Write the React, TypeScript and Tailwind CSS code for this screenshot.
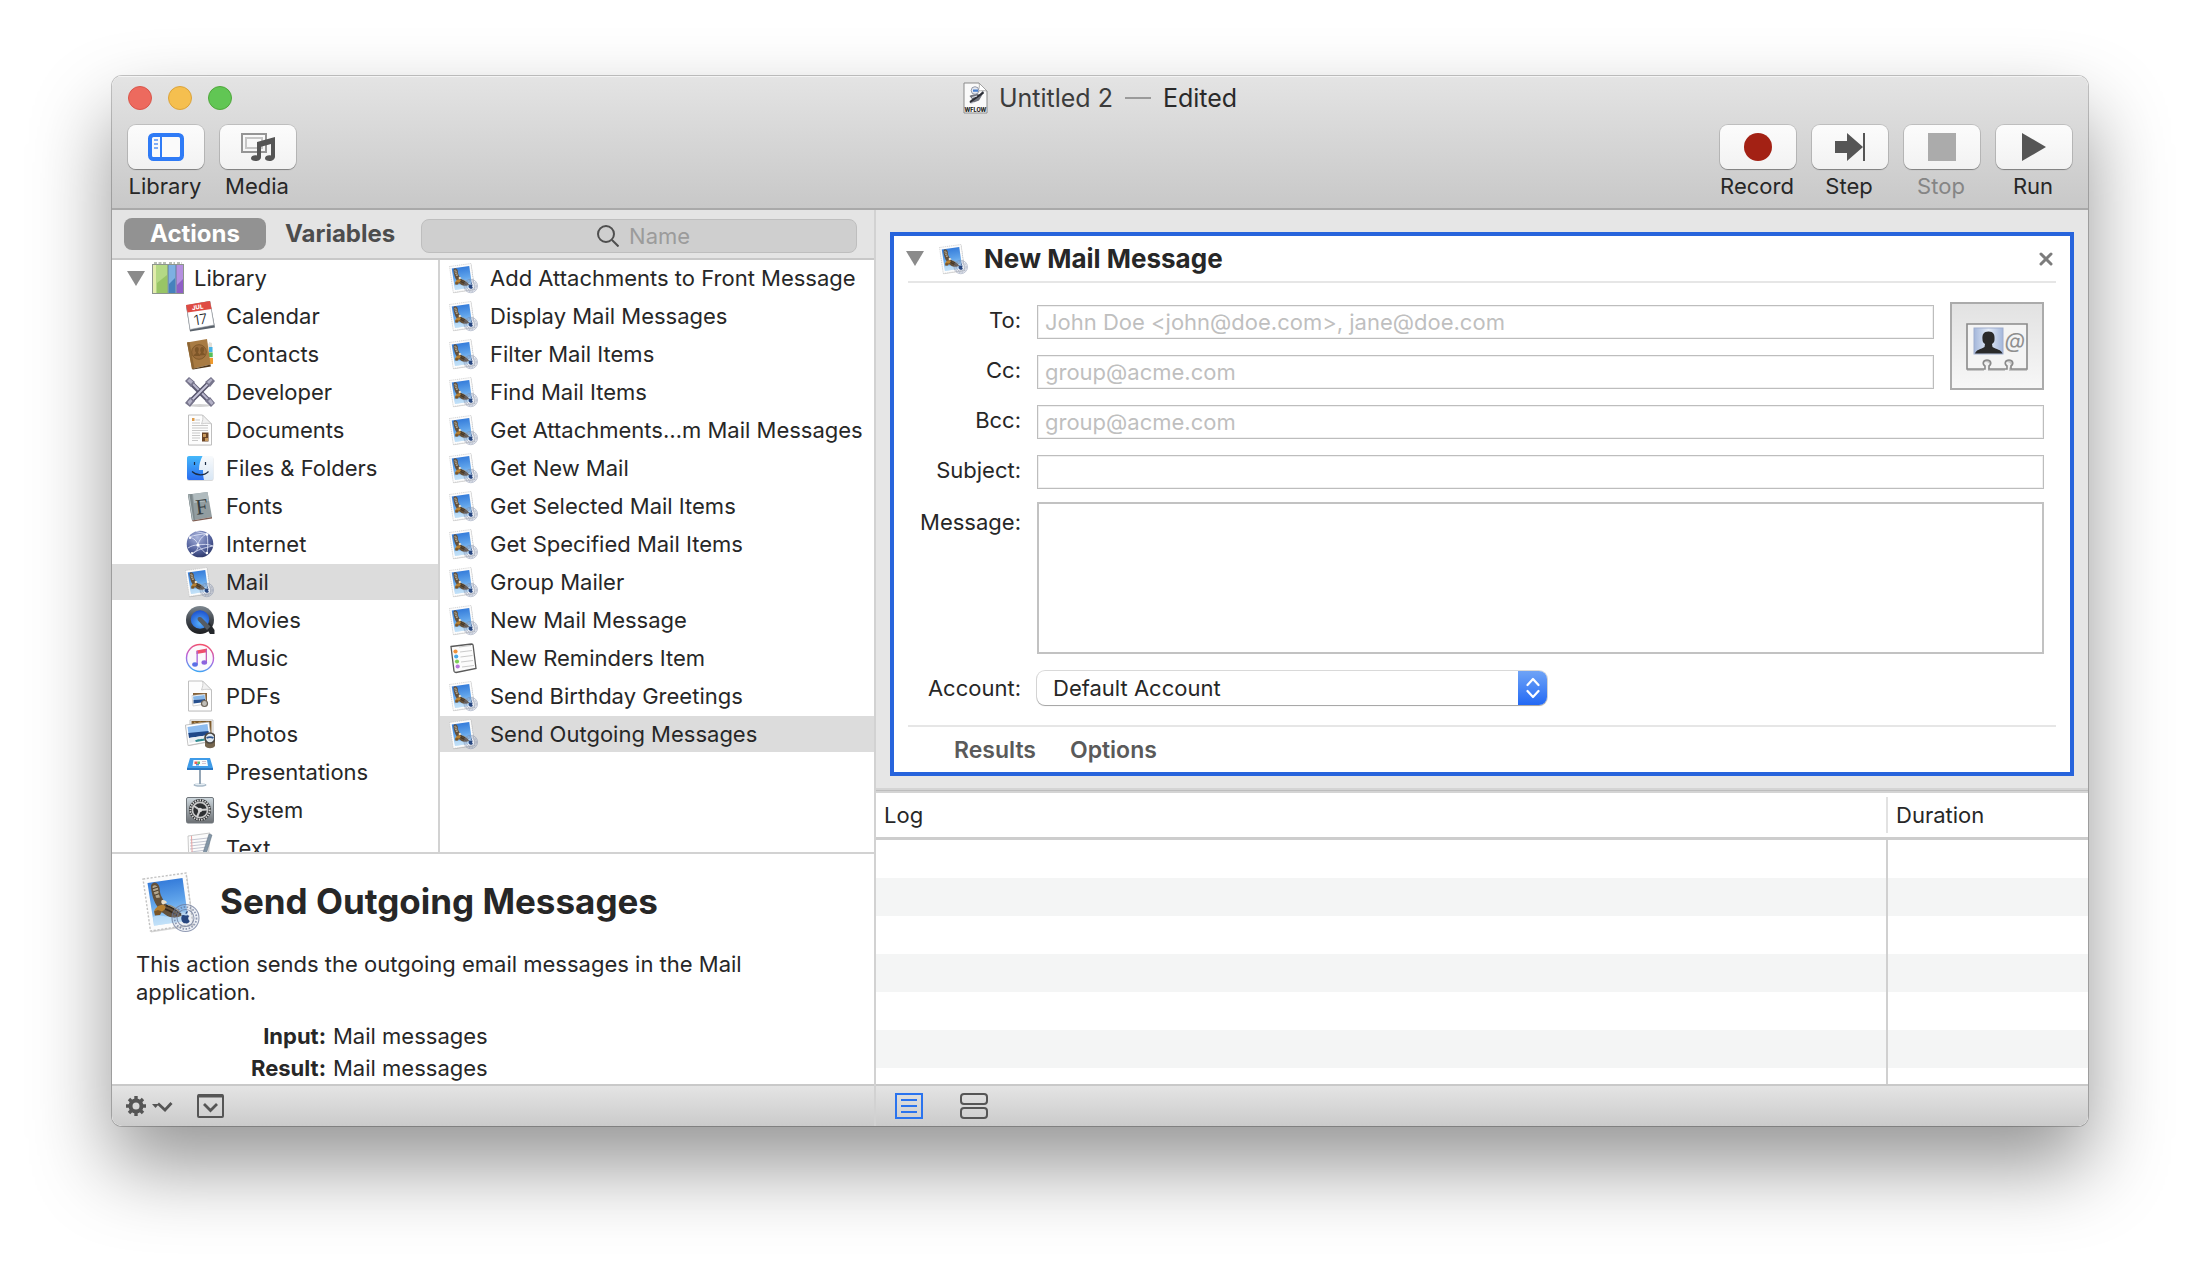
import type { ReactNode } from 'react';

/* ---------- Icons ---------- */

function MailIcon({ className }: { className: string }) {
  return (
    <svg viewBox="0 0 60 62" className={className} aria-hidden="true">
      <defs>
        <linearGradient id="sky" x1="0" y1="0" x2="0.15" y2="1">
          <stop offset="0" stopColor="#2a72d6" />
          <stop offset="0.55" stopColor="#5fa3ea" />
          <stop offset="1" stopColor="#a9d4f6" />
        </linearGradient>
      </defs>
      <path d="M2 9.500 45 3.500 52 55 9 61.500Z" fill="#000" opacity="0.160" />
      <path d="M1 8 44 2 51 53.500 8.500 60Z" fill="#fcfcfc" />
      <path d="M1 8 44 2 51 53.500 8.500 60Z" fill="none" stroke="#c2c2c2" strokeWidth="1.400" strokeDasharray="2.200 1.600" />
      <path d="M5.500 12 40.500 7 46.500 49.500 12 54.800Z" fill="url(#sky)" />
      <path d="M12 54.800 11 46c7-4 12 1 18-1s10-5 16.500-3l1 7.500Z" fill="#d6ebfa" opacity="0.550" />
      <path d="M9 16c-.3-2 1-4 3-4.500 3 0 5 2 5.500 5 .4 4 .6 7 2.500 10l3 6c3 2 5 2.500 8 4.500 4 2.500 7 4.500 9 7.500-3 2-8 2.500-12 1.500-4-1-6-4-9-5l-4-6c-3-4-5.500-12-6-19Z" fill="#63503a" />
      <path d="M10.500 15.500c1.500-2 4.500-1.500 5.500 1.500.5 4 .5 6 2 9.500l-3.500.5c-2-3.500-3.800-7.500-4-11.500Z" fill="#b3a68e" />
      <path d="M10 18l6-2M10.700 21l6-2M12 24.500l5.500-2" stroke="#4f4232" strokeWidth="1.200" fill="none" />
      <path d="M12 40.500c1-3.500 4.500-6.500 8.500-6.800 3 .5 4 3 2 5-3.500 3-7 4-10.500 1.800Z" fill="#b57f30" />
      <path d="M12 40.500 16 39l4 1.500-2 3.500-5 .5Z" fill="#7a5526" />
      <path d="M19.500 29.500c2-1 4.500 0 5.500 2l-3.500 2c-1.700 0-2.700-2-2-4Z" fill="#e9dfcb" />
      <path d="M24 34.500c5 1.500 10 4.500 15 9M23 38c5 1.500 8 4 12 6.500" stroke="#33281c" strokeWidth="1.700" fill="none" />
      <path d="M26 34c4 1 8 3 12 7" stroke="#a38e6d" strokeWidth="1.200" fill="none" />
      <g fill="none" stroke="#6d7a9b" strokeWidth="1.100" opacity="0.750">
        <circle cx="43.500" cy="47" r="13.500" fill="#b4c0d6" fillOpacity="0.250" />
        <circle cx="43.500" cy="47" r="8.500" />
        <circle cx="43.500" cy="47" r="11" strokeWidth="1.800" strokeDasharray="1.600 1.500" />
      </g>
      <path d="M40 44.500c1.500-1 2.500 0 3.500 0s2.500-1 4 .5c-2 1.500-1.500 4 .3 5-1 2-2 3-4.300 2.300-3 .7-5.500-4.500-3.500-7.800ZM43.500 43c0-2 1-3 2.300-3 0 2-1 3-2.300 3Z" fill="#27467f" />
    </svg>
  );
}

function Icon({ children }: { children: ReactNode }) {
  return (
    <svg viewBox="0 0 30 32" className="h-8 w-[30px] shrink-0" aria-hidden="true">
      {children}
    </svg>
  );
}

const BooksIcon = () => (
  <svg viewBox="0 0 32 32" className="size-8 shrink-0" aria-hidden="true">
    <path d="M2 1h13M17 1h6M25 1h5" stroke="#b8beb4" strokeWidth="2" strokeDasharray="3 1.500" />
    <rect x="0" y="2" width="16" height="30" fill="#b4d985" />
    <path d="M5 31V21l10-8v18Z" fill="#98c566" />
    <rect x="1" y="3" width="3" height="28" fill="#e2ecac" />
    <rect x="16" y="2" width="8" height="30" fill="#7db0e2" />
    <path d="M17 31V22l6-6v15Z" fill="#4681bd" />
    <rect x="24" y="2" width="8" height="30" fill="#b590e0" />
    <path d="M25 31V23l6-6v14Z" fill="#8f5fc6" />
    <path d="M16 2v30M24 2v30" stroke="#5b6f80" strokeWidth="0.800" />
    <path d="M0 31.500h32M.5 2v29M31.500 2v29M0 2.500h32" stroke="#8d958c" strokeWidth="1" />
  </svg>
);

const CalendarIcon = () => (
  <Icon>
    <path d="M1 5.500 25 1l5 26.500L5 31.500Z" fill="#5a626b" />
    <path d="M1.500 5.500 25 1.500l4 23.500L5 29.500Z" fill="#fff" stroke="#9aa0a6" strokeWidth="0.600" />
    <path d="M1 5 25 1l1.500 8L2.500 12.500Z" fill="#df4b43" />
    <g transform="rotate(-9 15 16)" textAnchor="middle" fontFamily="Inter, sans-serif">
      <text x="14" y="9" fontSize="6" fontWeight="800" fill="#fff">JUL</text>
      <text x="15" y="24.500" fontSize="14" fontWeight="300" fill="#222">17</text>
    </g>
  </Icon>
);

const ContactsIcon = () => (
  <Icon>
    <path d="M22 5l5 2 1 18-4 3Z" fill="#e9e4da" />
    <path d="M24 4l3 1v5h-3Z" fill="#e3e0d8" />
    <path d="M24 9h3.500v5H24Z" fill="#46b3e8" />
    <path d="M24 14.500h3.700v4.500H24Z" fill="#54c05a" />
    <path d="M24 20h4v6h-4Z" fill="#ef9a2d" />
    <path d="M2 4.500 22 1l3.500 25.500L7 31Z" fill="#a87b43" />
    <path d="M2 4.500 4.500 4l5 26.500L7 31Z" fill="#8d6533" />
    <path d="m7 31 18.500-4.500.3 2L8 31.500Z" fill="#4d3518" />
    <circle cx="14" cy="14" r="7.300" fill="#9b6d3b" stroke="#80592a" strokeWidth="1" />
    <path d="M8.500 18c.5-2 2.500-2 2.500-3.500-2-2-1-5.500 1-5.500s2.300 3 1 5.500c.3 1 1.500 1 2 3.500ZM14.500 17.500c.3-1.500 1-2 1.500-3-1.500-3-.5-5.500 1.300-5.500 2.300 0 2.500 3.500 1 5.300 0 1.200 1.700 1.200 2 2.700Z" fill="#7d5628" />
  </Icon>
);

const DeveloperIcon = () => (
  <Icon>
    <ellipse cx="15" cy="29.500" rx="11" ry="1.500" fill="#d3d3d3" />
    <path d="M5 6 25 26" stroke="#5c5a72" strokeWidth="5" />
    <path d="M5.500 5.500 25 25.500" stroke="#b9b7cd" strokeWidth="2" />
    <path d="M25 6 5 26" stroke="#55536a" strokeWidth="5" />
    <path d="M25 6 5 26" stroke="#c6c4d8" strokeWidth="2" />
    <path d="M0 5 4 1l6 5-4 5ZM20 6l6-5 4 4-5 6ZM0 27l5-6 5 4-5 6ZM20 25l5-4 5 6-4 4Z" fill="#77758c" />
    <path d="M2 5l2.500-2.500L8 5.500 6 8ZM22 6l4-3.500L27.500 4 24 8ZM2.500 26l3-3 2 2-3 4ZM23 25l2.500-2 3 4-2 2Z" fill="#b3b1c6" />
  </Icon>
);

const Page = ({ children }: { children: ReactNode }) => (
  <Icon>
    <path d="M3.500 1.500h14l9 9v21h-23Z" fill="#000" opacity="0.100" />
    <path d="M3.500 1h14l9 9v21h-23Z" fill="#fdfdfd" stroke="#bfbfbf" />
    <path d="M17.500 1c1 3 0 6-1 9 4-1 7-1 10 0Z" fill="#f1f1f1" stroke="#c4c4c4" strokeWidth="0.800" />
    {children}
  </Icon>
);

const DocumentsIcon = () => (
  <Page>
    <rect x="7" y="4" width="2.500" height="3" fill="#dd9d4f" />
    <path d="M10.500 6H15M7 9h8M7 11.500h16M7 14h16M7 16.500h16M7 19h8M7 21.500h8M7 24h8M7 26.500h6" stroke="#c3c3c3" strokeWidth="0.900" />
    <rect x="17" y="18.500" width="6.500" height="9" fill="#6b4526" />
    <path d="M18 20h3v3h-3ZM20 24h3v3h-3Z" fill="#c7985c" />
  </Page>
);

const FinderIcon = () => (
  <Icon>
    <defs>
      <linearGradient id="finderBlue" x1="0" y1="0" x2="0" y2="1">
        <stop offset="0" stopColor="#45b8fa" />
        <stop offset="1" stopColor="#2a6df0" />
      </linearGradient>
      <linearGradient id="finderWhite" x1="0" y1="0" x2="0" y2="1">
        <stop offset="0" stopColor="#f8fafc" />
        <stop offset="1" stopColor="#d8e6f4" />
      </linearGradient>
    </defs>
    <rect x="2" y="5" width="26.500" height="24" rx="2" fill="#000" opacity="0.150" />
    <rect x="2" y="4" width="26.500" height="24" rx="2" fill="url(#finderWhite)" />
    <path d="M4 4h13.500c-2 4-3.500 8-3.500 14h4c0 3.500.3 7 1 10H4a2 2 0 0 1-2-2V6c0-1.100.9-2 2-2Z" fill="url(#finderBlue)" />
    <path d="M9.500 10v3M20.500 10v3" stroke="#1c2c44" strokeWidth="1.200" />
    <path d="M7 19.500c5 4.500 12 4.500 16.500 0" fill="none" stroke="#1c2c44" strokeWidth="1.200" />
  </Icon>
);

const FontsIcon = () => (
  <Icon>
    <path d="M3 4.500 22.500 2 27 27l-20 3.500Z" fill="#929da0" />
    <path d="M3 4.500 7 4l3 26-3 .5Z" fill="#7d888b" />
    <path d="M4 5l4 25" stroke="#c6d0d3" strokeWidth="0.800" />
    <path d="M8 4 22.500 2l1.500 9L9 13Z" fill="#b0bbbe" />
    <path d="M7 30.500 27 27v1.500L8 31.500Z" fill="#7f5d52" />
    <text x="16.500" y="24" fontSize="22" textAnchor="middle" fontFamily="'Liberation Serif', serif" fill="#363d40" transform="rotate(-7 16 16)">F</text>
  </Icon>
);

const InternetIcon = () => (
  <Icon>
    <defs>
      <radialGradient id="globe" cx="0.4" cy="0.25" r="0.8">
        <stop offset="0" stopColor="#aab5dc" />
        <stop offset="0.6" stopColor="#56649f" />
        <stop offset="1" stopColor="#2b3667" />
      </radialGradient>
    </defs>
    <circle cx="15" cy="16" r="13.300" fill="url(#globe)" />
    <path d="M4 9c5 1 8 4 9 8s-3 7-6 9M13 17c5-1 10-1 15 1M13 17c3 4 6 7 9 9M13 17c1-5 4-9 9-11M4 9c6-2 12-3 18-3M22 6c1 6 1 14 0 20M3 20c3-2 6-3 10-3M7 26c5-4 11-6 21-8M22 6c-4-1-9-2-11-2.500" fill="none" stroke="#e3e8fa" strokeWidth="0.900" opacity="0.900" />
    <g fill="#fff">
      <circle cx="13" cy="17" r="1.600" />
      <circle cx="22" cy="6.500" r="1.300" />
      <circle cx="22" cy="25" r="1.200" />
      <circle cx="7" cy="25" r="1.100" />
      <circle cx="5" cy="10" r="1.100" />
    </g>
  </Icon>
);

const MoviesIcon = () => (
  <Icon>
    <defs>
      <linearGradient id="qRing" x1="0" y1="0" x2="0" y2="1">
        <stop offset="0" stopColor="#7e8890" />
        <stop offset="0.5" stopColor="#42484f" />
        <stop offset="1" stopColor="#1c1e21" />
      </linearGradient>
      <radialGradient id="qFace" cx="0.5" cy="0.7" r="0.7">
        <stop offset="0" stopColor="#56b0fb" />
        <stop offset="1" stopColor="#1b50cf" />
      </radialGradient>
    </defs>
    <circle cx="15" cy="16" r="14" fill="url(#qRing)" />
    <path d="M20 22l4-4 5.500 8v4H25Z" fill="#24272b" />
    <circle cx="15" cy="15.500" r="9.200" fill="url(#qFace)" />
    <path d="M13 13.500c1-1 3-.5 4 .5l8.500 8.500-3.500 3.500-8.500-9c-1-1-1.200-2.700-.5-3.500Z" fill="#555c64" />
  </Icon>
);

const MusicIcon = () => (
  <Icon>
    <defs>
      <linearGradient id="itunes" x1="0.6" y1="0" x2="0.4" y2="1">
        <stop offset="0" stopColor="#f4506b" />
        <stop offset="0.5" stopColor="#b865dd" />
        <stop offset="1" stopColor="#3fa6f4" />
      </linearGradient>
    </defs>
    <circle cx="15" cy="16" r="13.500" fill="#fbf9fc" stroke="url(#itunes)" strokeWidth="1.400" />
    <path d="M11.500 8.500 22 6.500v3.700L11.500 12Z" fill="#ee4f6d" />
    <path d="M11.500 9h1.300v13.500h-1.300Z" fill="#a862d8" />
    <path d="M20.700 7.500H22v13h-1.300Z" fill="#c35fb6" />
    <ellipse cx="10" cy="22.500" rx="2.800" ry="2.200" fill="#5b6fe6" />
    <ellipse cx="19.300" cy="20.500" rx="2.800" ry="2.200" fill="#8c63de" />
  </Icon>
);

const PdfIcon = () => (
  <Page>
    <path d="M8 13h14v12H8Z" fill="#866238" />
    <path d="M7 15.500 20 14l1 10-13 2Z" fill="#fff" stroke="#aaa" strokeWidth="0.500" />
    <path d="M8 16.500 19.500 15l.5 4-11.500 1Z" fill="#85b6e8" />
    <path d="M8.500 20 20 19l.5 3-12 1.500Z" fill="#27508e" />
    <circle cx="19.500" cy="23.500" r="3" fill="#c0beb8" stroke="#6c655b" strokeWidth="1.200" />
  </Page>
);

const PhotosIcon = () => (
  <Icon>
    <path d="M5 2h23v18H5Z" fill="#fff" stroke="#a9a9a9" strokeWidth="0.700" />
    <path d="M6.500 3h20v15h-20Z" fill="#7d5a2c" />
    <path d="M9 4l3 2 3-2 4 2 3-2" stroke="#c59d5b" fill="none" />
    <path d="M0 7.500 24 4l3 20-23 4Z" fill="#000" opacity="0.200" />
    <path d="M.5 7 24 4l2.500 19L3 27.500Z" fill="#fff" stroke="#adadad" strokeWidth="0.700" />
    <path d="M2.500 9 22.500 6l1 8-20 2Z" fill="#8dbcf0" />
    <path d="M3.300 15 23.500 13l.5 4-20 3Z" fill="#1f4787" />
    <path d="M4 20l20-3 .7 4L4.500 25Z" fill="#e9eef2" />
    <path d="M10 22.500c3-2 7-1 9-2l1 2-9 1.500Z" fill="#2e8b91" />
    <path d="M20 23h10v5c-2 3-8 3-10 0Z" fill="#75664f" />
    <circle cx="25" cy="20" r="5" fill="#dfe8f0" stroke="#4a4640" strokeWidth="1.700" />
    <path d="M21.500 20c2-1 5-1 7 0" stroke="#2f568f" strokeWidth="1.700" fill="none" />
  </Icon>
);

const KeynoteIcon = () => (
  <Icon>
    <ellipse cx="15" cy="29" rx="6.500" ry="1.800" fill="#a9bac9" />
    <ellipse cx="15" cy="28.300" rx="5" ry="1" fill="#e3ebf1" />
    <path d="M15 12v16" stroke="#94a5b5" strokeWidth="2" />
    <path d="M5 2h20l3 10H2Z" fill="#3f9be8" />
    <path d="M2 12h26v2H2Z" fill="#2877c4" />
    <path d="M8.500 4h13.500l1 6H7.500Z" fill="#f6fafd" />
    <path d="M9.500 5.500h3V8h-3Z" fill="#ec5f58" />
    <path d="M12.500 5.500H15V8h-2.500Z" fill="#5cc16a" />
    <path d="M11 8h3v1.500h-3Z" fill="#4a90e2" />
    <path d="M17 5.500h4M17 7.500h4" stroke="#d4c3cf" />
  </Icon>
);

const SystemIcon = () => (
  <Icon>
    <defs>
      <linearGradient id="sysBg" x1="0" y1="0" x2="0" y2="1">
        <stop offset="0" stopColor="#cfd9df" />
        <stop offset="1" stopColor="#6b6f73" />
      </linearGradient>
    </defs>
    <rect x="1.500" y="3.500" width="27" height="25.500" rx="1.500" fill="url(#sysBg)" stroke="#71777c" />
    <circle cx="15" cy="16" r="11" fill="#26282a" />
    <circle cx="15" cy="16" r="9.700" fill="none" stroke="#d2d2d2" strokeWidth="2" strokeDasharray="1.500 1" />
    <circle cx="15" cy="16" r="7.600" fill="#2e3032" stroke="#c8c8c8" strokeWidth="1.700" />
    <path d="M15 16 9 12M15 16l7-.5M15 16l-3 7" stroke="#cfcfcf" strokeWidth="2" />
    <circle cx="15" cy="16" r="2.200" fill="#d8d8d8" />
  </Icon>
);

const TextIcon = () => (
  <Icon>
    <path d="M3 4 25 1l-2 29-19 2Z" fill="#fbfbfb" stroke="#bcbcbc" strokeWidth="0.800" />
    <path d="M5 8l18-2M5 11l18-2M5 14l17-2M5 17l17-2M6 20l15-2" stroke="#b5b9c6" strokeWidth="0.800" />
    <path d="M6.500 4 7.500 31" stroke="#e69a98" strokeWidth="0.900" />
    <path d="M24 2l3 1-8 26-3 2v-4Z" fill="#8295a6" stroke="#61717e" strokeWidth="0.500" />
  </Icon>
);

const RemindersIcon = () => (
  <Icon>
    <path d="M2 4.500 22.500 2c1 0 1.500.3 1.600 1.200L27 26.500 7 30.500c-1 0-1.800-.3-2-1.300Z" fill="#fcfcfc" stroke="#5a5a5a" strokeWidth="1.300" />
    <path d="m11 10 12-1.500M11.500 15l12-1.500M12 20l12-1.500M13 25l12-1.500M10 5l12-1.500" stroke="#c4c4c4" strokeWidth="0.900" />
    <circle cx="6.500" cy="9.500" r="2.100" fill="#f0923a" />
    <circle cx="7.200" cy="14.500" r="2.100" fill="#48a8e8" />
    <circle cx="8" cy="19.500" r="2.100" fill="#7dce58" />
    <circle cx="8.700" cy="24.500" r="2.100" fill="#b878dd" />
  </Icon>
);

const ListMail = () => <MailIcon className="h-8 w-[30px] shrink-0" />;

const Triangle = () => (
  <svg viewBox="0 0 18 15" className="h-[15px] w-[18px] shrink-0" aria-hidden="true">
    <path d="M0 0h18L9 15Z" fill="#8b8b8b" />
  </svg>
);

const WorkflowDocIcon = () => (
  <svg viewBox="0 0 26 32" className="h-8 w-[26px]" aria-hidden="true">
    <path d="M1 1h15l8 8v22H1Z" fill="#fafafa" stroke="#8b8b8b" />
    <path d="M16 1c1 3 0 6-1 8 4-.5 6-.5 9 0Z" fill="#fff" stroke="#9b9b9b" strokeWidth="0.800" />
    <path d="M6.500 14c2-1.500 8-3 10-1.500l3-3.500 1.500 1-5 8.500-8 3-1.500-1 2.500-3.500Z" fill="#70737d" />
    <path d="M7 20 20.500 10.500" stroke="#2a2c33" strokeWidth="2" />
    <path d="M9 15.500l5-1.500M8 21.500l3-1" stroke="#d4d7df" strokeWidth="1.300" />
    <circle cx="12" cy="8.500" r="3.800" fill="#e7eaf1" stroke="#7e8494" strokeWidth="0.800" />
    <path d="M10 7.500h5v2.200h-5Z" fill="#477fd0" />
    <text x="12.500" y="29.500" fontSize="5.500" fontWeight="800" textAnchor="middle" fontFamily="Inter, sans-serif" fill="#222">WFLOW</text>
  </svg>
);

const LibraryGlyph = () => (
  <svg viewBox="0 0 36 28" className="h-7 w-9" aria-hidden="true">
    <rect x="2" y="2" width="32" height="24" rx="3.500" fill="#fafafa" stroke="#2f7bf6" strokeWidth="4" />
    <path d="M13 3v22" stroke="#2f7bf6" strokeWidth="2" />
    <path d="M6 7h4M6 11h4M6 15h4" stroke="#2f7bf6" strokeWidth="2" opacity="0.600" />
  </svg>
);

const MediaGlyph = () => (
  <svg viewBox="0 0 36 28" className="h-7 w-9" aria-hidden="true">
    <rect x="2" y="1" width="24" height="18" fill="none" stroke="#959595" strokeWidth="2" />
    <rect x="6" y="5" width="16" height="10" fill="none" stroke="#c6c6c6" strokeWidth="2" />
    <path d="M17 9 35 4v19.500c0 2.500-2.300 4.500-5.500 4.500-2.600 0-4.500-1-4.500-2.700 0-2.300 3.200-3.500 6-2.800V11l-10 2.800V24c0 2.500-2.300 4-5.500 4-2.600 0-4.500-1-4.500-2.700 0-2.300 3-3.500 6-2.800Z" fill="#555" />
  </svg>
);

const RecordGlyph = () => (
  <svg viewBox="0 0 28 28" className="size-7" aria-hidden="true">
    <circle cx="14" cy="14" r="14" fill="#a32114" />
  </svg>
);

const StepGlyph = () => (
  <svg viewBox="0 0 30 28" className="h-7 w-[30px]" aria-hidden="true">
    <path d="M0 8h12V0l16 14-16 14v-8H0Z" fill="#555" />
    <path d="M29 0v28" stroke="#555" strokeWidth="2" />
  </svg>
);

const StopGlyph = () => (
  <svg viewBox="0 0 28 28" className="size-7" aria-hidden="true">
    <path d="M0 0h28v28H0Z" fill="#ababab" />
  </svg>
);

const RunGlyph = () => (
  <svg viewBox="0 0 24 28" className="h-7 w-6" aria-hidden="true">
    <path d="M0 0l24 14L0 28Z" fill="#555" />
  </svg>
);

const CardGlyph = () => (
  <svg viewBox="0 0 64 52" className="h-[52px] w-16" aria-hidden="true">
    <defs>
      <linearGradient id="portrait" x1="0" y1="0" x2="1" y2="0">
        <stop offset="0" stopColor="#a3b6da" />
        <stop offset="0.5" stopColor="#e4ecf8" />
        <stop offset="1" stopColor="#a3b6da" />
      </linearGradient>
    </defs>
    <path d="M2 4h60v45H44v-3c3-2 2-6-2-6s-5 4-2 6v3H23v-3c3-2 2-6-2-6s-5 4-2 6v3H2Z" fill="#000" opacity="0.180" />
    <path d="M2 2h60v45H46v-3c3-2 2-6-2-6s-5 4-2 6v3H24v-3c3-2 2-6-2-6s-5 4-2 6v3H2Z" fill="#f4f4f4" stroke="#8a8a8a" strokeWidth="1.600" />
    <rect x="9" y="6" width="29" height="26" fill="url(#portrait)" stroke="#a0aece" />
    <path d="M10 31.500c1-4 6-4 9.500-6.500l.5-3c-2-1-2.500-3-2.500-4.500-.5-5 1-8 6-8s6.500 3 6 8c0 1.500-.5 3.500-2.500 4.500l.5 3c3.500 2.500 9 2.500 10 6.500Z" fill="#2a2a2a" />
    <text x="50" y="26" fontSize="21" fontStyle="italic" textAnchor="middle" fontFamily="Inter, sans-serif" fill="#8f8f8f">@</text>
  </svg>
);

/* ---------- Data ---------- */

const libraryItems: { name: string; icon: ReactNode }[] = [
  { name: 'Calendar', icon: <CalendarIcon /> },
  { name: 'Contacts', icon: <ContactsIcon /> },
  { name: 'Developer', icon: <DeveloperIcon /> },
  { name: 'Documents', icon: <DocumentsIcon /> },
  { name: 'Files & Folders', icon: <FinderIcon /> },
  { name: 'Fonts', icon: <FontsIcon /> },
  { name: 'Internet', icon: <InternetIcon /> },
  { name: 'Mail', icon: <ListMail /> },
  { name: 'Movies', icon: <MoviesIcon /> },
  { name: 'Music', icon: <MusicIcon /> },
  { name: 'PDFs', icon: <PdfIcon /> },
  { name: 'Photos', icon: <PhotosIcon /> },
  { name: 'Presentations', icon: <KeynoteIcon /> },
  { name: 'System', icon: <SystemIcon /> },
  { name: 'Text', icon: <TextIcon /> },
];

const actions = [
  'Add Attachments to Front Message',
  'Display Mail Messages',
  'Filter Mail Items',
  'Find Mail Items',
  'Get Attachments…m Mail Messages',
  'Get New Mail',
  'Get Selected Mail Items',
  'Get Specified Mail Items',
  'Group Mailer',
  'New Mail Message',
  'New Reminders Item',
  'Send Birthday Greetings',
  'Send Outgoing Messages',
];

/* ---------- Parts ---------- */

function ToolButton({ label, disabled, children }: { label: string; disabled?: boolean; children: ReactNode }) {
  return (
    <button type="button" disabled={disabled} className="group flex w-[76px] flex-col items-center gap-1">
      <span className="flex h-11 w-full items-center justify-center rounded-lg bg-linear-to-b from-[#fcfcfc] to-[#f2f2f2] shadow-[0_0_0_1px_rgba(0,0,0,0.12),0_1px_1px_rgba(0,0,0,0.3)]">
        {children}
      </span>
      <span className="pr-0.5 leading-[26px] group-disabled:text-[#858585]">{label}</span>
    </button>
  );
}

function TitleBar() {
  return (
    <header className="border-b-2 border-[#a9a9a9] bg-linear-to-b from-[#e4e4e4] to-[#c8c8c8] px-4 pb-[9px] shadow-[inset_0_1px_0_#f4f4f4]">
      <div className="grid h-11 grid-cols-[1fr_auto_1fr] items-center">
        <div className="flex gap-4">
          <button type="button" aria-label="Close window" className="size-6 rounded-full border border-[#d9564b] bg-[#ed6a5e]" />
          <button type="button" aria-label="Minimize window" className="size-6 rounded-full border border-[#dba33b] bg-[#f5bf4f]" />
          <button type="button" aria-label="Zoom window" className="size-6 rounded-full border border-[#50a73c] bg-[#61c654]" />
        </div>
        <h1 className="flex items-center text-[25px] leading-8 text-[#3c3c3c]">
          <WorkflowDocIcon />
          <span className="ml-[10px]">Untitled 2</span>
          <span className="mx-3 h-0.5 w-[26px] bg-[#9a9a9a]" />
          <span className="text-[#2a2a2a]">Edited</span>
        </h1>
      </div>
      <div className="flex justify-between pt-[5px]">
        <div className="flex gap-4">
          <ToolButton label="Library"><LibraryGlyph /></ToolButton>
          <ToolButton label="Media"><MediaGlyph /></ToolButton>
        </div>
        <div className="flex gap-4">
          <ToolButton label="Record"><RecordGlyph /></ToolButton>
          <ToolButton label="Step"><StepGlyph /></ToolButton>
          <ToolButton label="Stop" disabled><StopGlyph /></ToolButton>
          <ToolButton label="Run"><RunGlyph /></ToolButton>
        </div>
      </div>
    </header>
  );
}

function LibraryPanel() {
  return (
    <aside className="flex w-[764px] shrink-0 flex-col border-r-2 border-[#d2d2d2]">
      <div className="flex h-[50px] items-start border-b-2 border-[#c8c8c8] bg-[#e4e4e4] pt-2 pr-[17px] pl-3">
        <button type="button" className="h-8 w-[142px] rounded-lg bg-[#929292] text-2xl leading-8 font-bold text-white">Actions</button>
        <button type="button" className="ml-[19px] h-8 text-2xl leading-8 font-bold text-[#4d4d4d]">Variables</button>
        <label className="mt-px ml-[26px] flex h-[34px] flex-1 items-center justify-center gap-[10px] rounded-lg border border-[#bebebe] bg-[#cfcfcf] pl-8">
          <svg viewBox="0 0 22 22" className="size-[22px] shrink-0" fill="none" stroke="#4f4f4f" strokeWidth="2" aria-hidden="true">
            <circle cx="9" cy="9" r="8" />
            <path d="m15 15 6.500 6.500" />
          </svg>
          <input type="text" role="searchbox" aria-label="Search actions" placeholder="Name" className="w-[84px] bg-transparent outline-none placeholder:text-[#9b9b9b]" />
        </label>
      </div>

      <div className="flex h-[594px] border-b-2 border-[#d2d2d2]">
        <div className="w-[328px] shrink-0 overflow-hidden border-r-2 border-[#d2d2d2]">
          <button type="button" aria-expanded="true" className="flex h-9 w-full items-center pl-[15px] text-left">
            <Triangle />
            <span className="ml-[7px]"><BooksIcon /></span>
            <span className="ml-[10px]">Library</span>
          </button>
          <ul className="mt-0.5 flex flex-col gap-0.5">
            {libraryItems.map(({ name, icon }) => (
              <li key={name}>
                <button
                  type="button"
                  aria-pressed={name === 'Mail'}
                  className="flex h-9 w-full items-center gap-[11px] pl-[73px] text-left aria-pressed:bg-[#dcdcdc]"
                >
                  {icon}
                  {name}
                </button>
              </li>
            ))}
          </ul>
        </div>
        <ul className="flex flex-1 flex-col gap-0.5 overflow-hidden">
          {actions.map((name) => (
            <li key={name}>
              <button
                type="button"
                aria-pressed={name === 'Send Outgoing Messages'}
                className="flex h-9 w-full items-center gap-[11px] pl-[9px] text-left whitespace-nowrap aria-pressed:bg-[#dcdcdc]"
              >
                {name === 'New Reminders Item' ? <RemindersIcon /> : <ListMail />}
                {name}
              </button>
            </li>
          ))}
        </ul>
      </div>

      <section className="h-[230px] overflow-hidden px-6 pt-[17px]">
        <div className="flex items-center gap-[18px] pl-1.5">
          <MailIcon className="h-[62px] w-[60px] shrink-0" />
          <h2 className="pb-0.5 text-[35px] leading-[58px] font-bold">Send Outgoing Messages</h2>
        </div>
        <p className="mt-[17px] max-w-[640px] leading-7">This action sends the outgoing email messages in the Mail application.</p>
        <dl className="mt-[14px] grid grid-cols-[190px_1fr] gap-x-[7px] leading-8">
          <dt className="text-right font-bold">Input:</dt>
          <dd>Mail messages</dd>
          <dt className="text-right font-bold">Result:</dt>
          <dd>Mail messages</dd>
        </dl>
      </section>

      <footer className="flex h-[42px] items-center border-t-2 border-[#c9c9c9] bg-linear-to-b from-[#e4e4e4] to-[#cbcbcb] pl-[13px]">
        <button type="button" aria-label="Action menu" className="flex items-center">
          <svg viewBox="0 0 48 22" className="h-[22px] w-12" aria-hidden="true">
            <g stroke="#555" fill="none">
              <circle cx="11" cy="11" r="5.500" strokeWidth="4" />
              <path d="M11 1v4M11 17v4M1 11h4M17 11h4M4 4l3 3M15 15l3 3M18 4l-3 3M7 15l-3 3" strokeWidth="3.400" />
            </g>
            <path d="M27 9h7l-3.500 4Z" fill="#555" />
            <path d="M33 8.500 40 15l6.500-7" fill="none" stroke="#555" strokeWidth="2.800" />
          </svg>
        </button>
        <button type="button" aria-label="Hide description" className="ml-6">
          <svg viewBox="0 0 27 24" className="h-6 w-[27px]" fill="none" stroke="#555" aria-hidden="true">
            <rect x="1" y="1" width="25" height="22" rx="1" strokeWidth="2" />
            <path d="M1 2h25" strokeWidth="3" />
            <path d="m7 10 6.500 6.500L20 10" strokeWidth="2.800" />
          </svg>
        </button>
      </footer>
    </aside>
  );
}

const fieldClass =
  'h-[34px] w-full min-w-0 border border-[#bdbdbd] bg-white px-[7px] shadow-[inset_0_0_0_1px_#f0f0f0] outline-none placeholder:text-[#bfbfbf]';
const labelClass = 'self-start text-right leading-[30px]';

function ActionCard() {
  return (
    <article className="border-4 border-[#2764dc] bg-white">
      <div className="mx-[14px] flex h-[47px] items-center border-b-2 border-[#e6e6e6]">
        <button type="button" aria-label="Collapse action" className="-ml-0.5"><Triangle /></button>
        <MailIcon className="ml-[15px] h-8 w-[30px]" />
        <h2 className="ml-[15px] text-[26px] leading-8 font-bold">New Mail Message</h2>
        <button type="button" aria-label="Remove action" className="mr-0.5 ml-auto">
          <svg viewBox="0 0 16 16" className="size-4" stroke="#7c7c7c" strokeWidth="3" strokeLinecap="round" aria-hidden="true">
            <path d="m3 3 10 10M13 3 3 13" />
          </svg>
        </button>
      </div>

      <form className="pt-[22px] pr-[26px] pb-5 pl-[14px]">
        <div className="grid grid-cols-[113px_1fr_94px] gap-4">
          <label htmlFor="to" className={labelClass}>To:</label>
          <input id="to" placeholder="John Doe <john@doe.com>, jane@doe.com" className={fieldClass} />
          <button type="button" aria-label="Address book" className="row-span-2 -mt-[3px] -mb-px flex items-center justify-center border-2 border-[#ababab] bg-linear-to-b from-[#e2e2e2] to-[#f7f7f7] pt-1">
            <CardGlyph />
          </button>
          <label htmlFor="cc" className={labelClass}>Cc:</label>
          <input id="cc" placeholder="group@acme.com" className={fieldClass} />
          <label htmlFor="bcc" className={labelClass}>Bcc:</label>
          <div className="col-span-2"><input id="bcc" placeholder="group@acme.com" className={fieldClass} /></div>
          <label htmlFor="subject" className={labelClass}>Subject:</label>
          <div className="col-span-2"><input id="subject" className={fieldClass} /></div>
        </div>
        <div className="mt-[13px] grid grid-cols-[113px_1fr] gap-x-4 gap-y-[17px]">
          <label htmlFor="message" className="mt-[5px] text-right leading-[30px]">Message:</label>
          <textarea id="message" className="block h-[152px] w-full resize-none border-2 border-[#c2c2c2] p-1.5 outline-none" />
          <label htmlFor="account" className="text-right leading-[34px]">Account:</label>
          <div className="relative w-[510px]">
            <select id="account" className="h-[34px] w-full appearance-none rounded-lg bg-white pl-4 shadow-[0_0_0_1px_rgba(0,0,0,0.15),0_1px_1px_rgba(0,0,0,0.25)] outline-none">
              <option>Default Account</option>
            </select>
            <span className="pointer-events-none absolute top-0 right-0 flex h-[34px] w-[29px] items-center justify-center rounded-r-lg bg-linear-to-b from-[#6fa3f6] to-[#2268f4]">
              <svg viewBox="0 0 14 22" className="h-[22px] w-[14px]" fill="none" stroke="#fff" strokeWidth="2.200" strokeLinecap="round" strokeLinejoin="round" aria-hidden="true">
                <path d="m1.500 8 5.500-6 5.500 6M1.500 14l5.500 6 5.500-6" />
              </svg>
            </span>
          </div>
        </div>
      </form>

      <div className="mx-[14px] flex h-[47px] items-center gap-[34px] border-t-2 border-[#e6e6e6] pl-[46px] text-[23px] font-semibold text-[#5a5a5a]">
        <button type="button">Results</button>
        <button type="button">Options</button>
      </div>
    </article>
  );
}

function LogPanel() {
  return (
    <section className="h-[291px] overflow-hidden bg-white">
      <table className="w-full table-fixed border-separate border-spacing-0 text-left">
        <thead>
          <tr className="h-[47px]">
            <th scope="col" className="border-b-[3px] border-[#cdcdcd] pl-2 font-normal">Log</th>
            <th scope="col" className="w-[202px] border-b-[3px] border-[#cdcdcd] p-0 font-normal">
              <div className="border-l-2 border-[#e2e2e2] pl-2 leading-9">Duration</div>
            </th>
          </tr>
        </thead>
        <tbody>
          {[0, 1, 2, 3, 4, 5, 6].map((row) => (
            <tr key={row} className="h-[38px] even:bg-[#f4f5f5]">
              <td />
              <td className="border-l-2 border-[#d0d0d0]" />
            </tr>
          ))}
        </tbody>
      </table>
    </section>
  );
}

function WorkflowPanel() {
  return (
    <main className="flex min-w-0 flex-1 flex-col bg-[#e6e6e6]">
      <div className="px-[14px] pt-[22px] pb-3">
        <ActionCard />
      </div>
      <div className="h-[5px] border-y-2 border-[#d4d4d4] bg-[#bdbdbd]" />
      <LogPanel />
      <footer className="flex h-[42px] items-center gap-[37px] border-t-2 border-[#c9c9c9] bg-linear-to-b from-[#e4e4e4] to-[#cbcbcb] pl-[19px]">
        <button type="button" aria-label="Show log">
          <svg viewBox="0 0 28 26" className="h-[26px] w-7" fill="none" stroke="#2a73ee" strokeWidth="2" aria-hidden="true">
            <path d="M1 1h26v24H1ZM6 7h16M6 13h16M6 19h16" />
          </svg>
        </button>
        <button type="button" aria-label="Show variables">
          <svg viewBox="0 0 28 26" className="h-[26px] w-7" fill="none" stroke="#555" strokeWidth="2" aria-hidden="true">
            <rect x="1" y="1" width="26" height="10" rx="3" />
            <rect x="1" y="15" width="26" height="10" rx="3" />
          </svg>
        </button>
      </footer>
    </main>
  );
}

export default function App() {
  return (
    <div className="min-h-screen bg-white px-28 pt-[76px] pb-[148px] font-['Inter',sans-serif] text-[22px] leading-[30px] text-[#272727]">
      <div className="rounded-[10px] shadow-[0_0_0_1px_rgba(0,0,0,0.22),0_40px_80px_rgba(0,0,0,0.42)]">
        <div className="overflow-hidden rounded-[10px] bg-white">
          <TitleBar />
          <div className="flex">
            <LibraryPanel />
            <WorkflowPanel />
          </div>
        </div>
      </div>
    </div>
  );
}
